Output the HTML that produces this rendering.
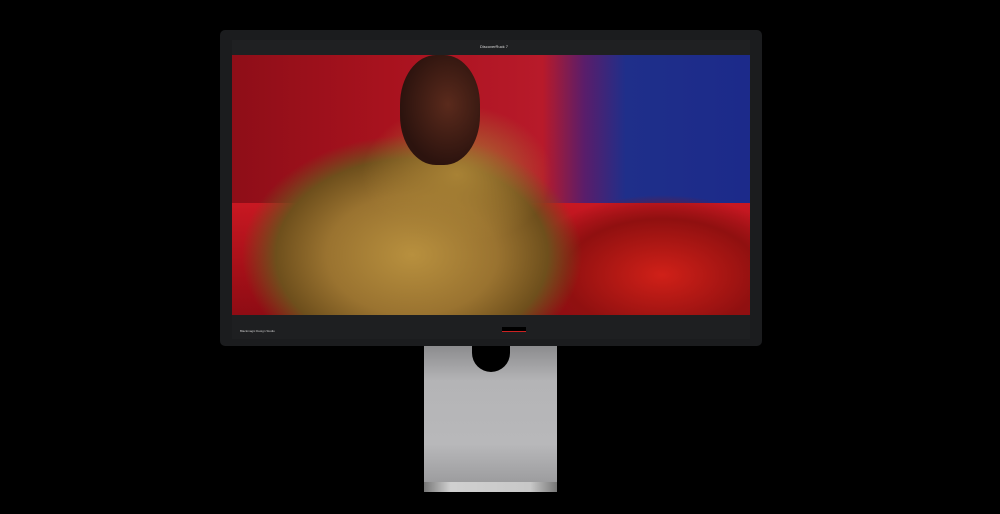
<!DOCTYPE html>
<html><head><style>
*{margin:0;padding:0;box-sizing:border-box}
body{width:1000px;height:514px;background:#000;position:relative;overflow:hidden;font-family:"Liberation Sans",sans-serif}
.mon{position:absolute;left:220px;top:30px;width:542px;height:316px;background:#1b1c1e;border-radius:5px}
.bar{position:absolute;left:232px;top:40px;width:518px;height:15px;background:#1f2022}
.scr{position:absolute;left:232px;top:55px;width:518px;height:260px;overflow:hidden;
background:linear-gradient(90deg,#8e0e18 0%,#a8121e 30%,#b81a2a 60%,#5a1d6a 68%,#1f2f8a 76%,#1c2a8a 100%)}
.floor{position:absolute;left:0;top:148px;width:100%;height:112px;background:linear-gradient(180deg,#c81822,#a51018 60%,#8e0c14)}
.fig{position:absolute;left:10px;top:80px;width:340px;height:240px;background:radial-gradient(closest-side,#b8903e 0%,#9a7330 50%,#6e4f1c 80%,rgba(110,60,20,0) 100%)}
.neck{position:absolute;left:130px;top:50px;width:190px;height:140px;background:radial-gradient(closest-side,#a88235 0%,rgba(150,110,40,0) 100%)}
.head{position:absolute;left:168px;top:0;width:80px;height:110px;border-radius:45%;background:radial-gradient(ellipse at 60% 45%,#5a2a1c,#2c130e 70%)}
.coat{position:absolute;left:290px;top:140px;width:280px;height:160px;background:radial-gradient(closest-side,#d02018,#901010 70%,rgba(140,10,10,0) 100%)}
.bot{position:absolute;left:232px;top:315px;width:518px;height:24px;background:#1e1f21}
.stand{position:absolute;left:424px;top:346px;width:133px;height:140px;background:linear-gradient(180deg,#8c8c8e 0%,#b4b4b6 25%,#b8b8ba 70%,#9a9a9c 100%)}
.hole{position:absolute;left:472px;top:346px;width:38px;height:26px;background:#000;border-radius:0 0 19px 19px}
.foot{position:absolute;left:424px;top:482px;width:133px;height:10px;background:linear-gradient(90deg,#777,#d0d0d0 20%,#c8c8c8 80%,#777)}
.t{position:absolute;color:#ccc;font-size:3px}
</style></head><body>
<div class="mon"></div>
<div class="bar"></div>
<div class="t" style="left:480px;top:44px;font-size:4px;color:#ddd">DiscoverRuck 7</div>
<div class="scr"><div class="floor"></div><div class="coat"></div><div class="fig"></div><div class="neck"></div><div class="head"></div></div>
<div class="bot"></div>
<div style="position:absolute;left:502px;top:327px;width:24px;height:5px;background:#000;border-bottom:1px solid #c22"></div>
<div class="t" style="left:240px;top:329px">Blackmagic Design Studio</div>
<div class="stand"></div>
<div class="hole"></div>
<div class="foot"></div>
</body></html>
